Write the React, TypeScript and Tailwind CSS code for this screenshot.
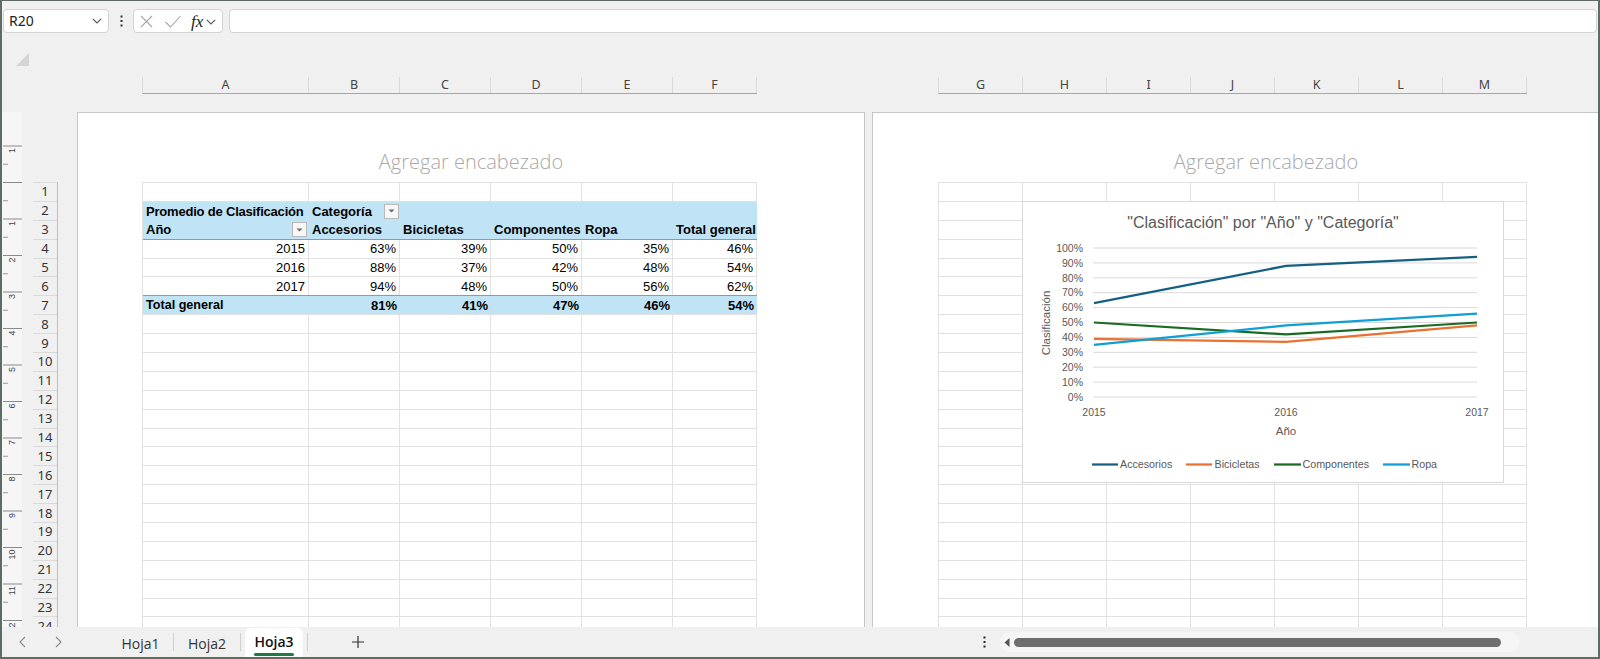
import React from 'react';

type Col = { label: string; w: string };

const leftCols: Col[] = [
  { label: 'A', w: 'w-[166px]' },
  { label: 'B', w: 'w-[91px]' },
  { label: 'C', w: 'w-[91px]' },
  { label: 'D', w: 'w-[91px]' },
  { label: 'E', w: 'w-[91px]' },
  { label: 'F', w: 'w-[84px]' },
];

const rightCols: Col[] = ['G', 'H', 'I', 'J', 'K', 'L', 'M'].map((l) => ({ label: l, w: 'w-[84px]' }));

const ROWS = Array.from({ length: 24 }, (_, i) => i + 1);

const series = [
  { name: 'Accesorios', color: '#156082', v: [63, 88, 94] },
  { name: 'Bicicletas', color: '#e97132', v: [39, 37, 48] },
  { name: 'Componentes', color: '#196b24', v: [50, 42, 50] },
  { name: 'Ropa', color: '#0f9ed5', v: [35, 48, 56] },
];

const pivotRows = [
  { year: '2015', vals: ['63%', '39%', '50%', '35%', '46%'] },
  { year: '2016', vals: ['88%', '37%', '42%', '48%', '54%'] },
  { year: '2017', vals: ['94%', '48%', '50%', '56%', '62%'] },
];
const totals = ['81%', '41%', '47%', '46%', '54%'];

function Chevron({ className = '' }: { className?: string }) {
  return (
    <svg width="10" height="6" viewBox="0 0 10 6" className={className}>
      <path d="M0.8 0.8 L5 5 L9.2 0.8" fill="none" stroke="#555" strokeWidth="1.1" />
    </svg>
  );
}

function VDots({ color = '#333' }: { color?: string }) {
  return (
    <svg width="3" height="12" viewBox="0 0 3 12">
      <rect x="0.5" y="0.5" width="2" height="2" fill={color} />
      <rect x="0.5" y="5" width="2" height="2" fill={color} />
      <rect x="0.5" y="9.5" width="2" height="2" fill={color} />
    </svg>
  );
}

function FilterButton() {
  return (
    <div className="w-[15px] h-[15px] shrink-0 bg-[#f7f7f7] border border-[#b9b9b9] flex items-center justify-center">
      <svg width="7" height="4" viewBox="0 0 7 4">
        <polygon points="0.5,0.5 6.5,0.5 3.5,3.5" fill="#6b6b6b" />
      </svg>
    </div>
  );
}

function FormulaBar() {
  return (
    <div className="h-[41px] shrink-0 flex items-start pt-[8px] pl-[1px] pr-[1px]">
      <div className="w-[106px] h-[24px] rounded-[4px] border border-[#d3d3d3] bg-white flex items-center justify-between pl-[5px] pr-[6px]">
        <span className="text-[14px] leading-none text-[#222] font-['Noto_Sans',sans-serif]">R20</span>
        <Chevron />
      </div>
      <div className="w-[24px] h-[24px] flex items-center justify-center">
        <VDots />
      </div>
      <div className="w-[90px] h-[24px] rounded-[4px] border border-[#d3d3d3] bg-white flex items-center pl-[5px]">
        <svg width="15" height="15" viewBox="0 0 15 15">
          <path d="M2 2 L13 13 M13 2 L2 13" stroke="#a8a8a8" strokeWidth="1.1" />
        </svg>
        <svg width="18" height="15" viewBox="0 0 18 15" className="ml-[10px]">
          <path d="M1.5 8 L6.5 13 L16.5 2" fill="none" stroke="#a8a8a8" strokeWidth="1.1" />
        </svg>
        <span className="ml-[9px] text-[17px] leading-none italic text-[#222] font-['Liberation_Serif',serif]">fx</span>
        <Chevron className="ml-[3px] mt-[2px]" />
      </div>
      <div className="ml-[6px] flex-1 h-[24px] rounded-[4px] border border-[#d3d3d3] bg-white" />
    </div>
  );
}

function ColumnHeaders({ cols }: { cols: Col[] }) {
  return (
    <div className="mt-[35px] h-[17px] flex shrink-0 border-l border-b border-[#a6a6a6] border-l-[#dadada]">
      {cols.map((c) => (
        <div
          key={c.label}
          className={`${c.w} shrink-0 h-full border-r border-[#dadada] flex items-center justify-center text-[12.5px] leading-none text-[#444] font-['Noto_Sans',sans-serif]`}
        >
          {c.label}
        </div>
      ))}
    </div>
  );
}

function Ruler() {
  const zero = 70.5;
  const step = 36.5;
  const majors = Array.from({ length: 14 }, (_, i) => i - 1);
  return (
    <svg width="20" height="515" className="shrink-0 bg-[#f6f6f6]">
      {majors.map((n) => {
        const y = zero + n * step;
        return (
          <g key={n}>
            <line x1="1" x2="20" y1={y} y2={y} stroke="#8a8a8a" strokeWidth="1" />
            <line x1="1" x2="6" y1={y + step / 2} y2={y + step / 2} stroke="#9a9a9a" strokeWidth="1" />
            {n !== 0 && (
              <text
                transform={`translate(13 ${y + 2}) rotate(-90)`}
                textAnchor="end"
                fontSize="9"
                fill="#444"
                fontFamily="Liberation Sans, sans-serif"
              >
                {n === -1 ? 1 : n}
              </text>
            )}
          </g>
        );
      })}
    </svg>
  );
}

function RowHeaders() {
  return (
    <div className="w-[25px] shrink-0 pt-[70px]">
      <div className="border-t border-r border-[#dadada] border-r-[#bdbdbd]">
        {ROWS.map((r) => (
          <div
            key={r}
            className="h-[18.9px] border-b border-[#dadada] flex items-center justify-center text-[13px] leading-none text-[#333] font-['Noto_Sans',sans-serif]"
          >
            {r}
          </div>
        ))}
      </div>
    </div>
  );
}

function PageHeader() {
  return (
    <div className="h-[69px] pt-[35px] text-center text-[20px] leading-[28px] font-light text-[#a9a9a9] font-['Open_Sans',sans-serif]">
      Agregar encabezado
    </div>
  );
}

const cellText = "text-[13px] leading-none text-black whitespace-nowrap font-['Liberation_Sans',sans-serif]";
const headText = "text-[12.6px] font-bold";

function PivotGrid() {
  return (
    <div className="w-[615px] border-l border-t border-[#e1e1e1]">
      {ROWS.map((r) => {
        if (r === 2) {
          return (
            <div key={r} className={`h-[18.9px] flex bg-[#c0e4f5] ${cellText} ${headText}`}>
              <div className="w-[166px] flex items-center px-[3px] tracking-[-0.2px]">Promedio de Clasificación</div>
              <div className="w-[91px] flex items-center justify-between pl-[3px] pr-[1px]">
                <span>Categoría</span>
                <FilterButton />
              </div>
            </div>
          );
        }
        if (r === 3) {
          return (
            <div key={r} className={`h-[18.9px] flex bg-[#c0e4f5] border-b border-[#4fb0e0] ${cellText} ${headText}`}>
              <div className="w-[166px] flex items-center justify-between pl-[3px] pr-[2px]">
                <span>Año</span>
                <FilterButton />
              </div>
              <div className="w-[91px] flex items-center px-[3px]">Accesorios</div>
              <div className="w-[91px] flex items-center px-[3px]">Bicicletas</div>
              <div className="w-[91px] flex items-center px-[3px]">Componentes</div>
              <div className="w-[91px] flex items-center px-[3px]">Ropa</div>
              <div className="w-[84px] flex items-center px-[3px]">Total general</div>
            </div>
          );
        }
        if (r >= 4 && r <= 6) {
          const d = pivotRows[r - 4];
          return (
            <div key={r} className={`h-[18.9px] flex ${cellText} ${r === 6 ? 'border-b border-[#4fb0e0]' : ''}`}>
              <div className={`w-[166px] flex items-center justify-end px-[3px] border-r border-[#e1e1e1] ${r === 6 ? '' : 'border-b'}`}>{d.year}</div>
              {d.vals.map((v, i) => (
                <div
                  key={i}
                  className={`${i === 4 ? 'w-[84px]' : 'w-[91px]'} flex items-center justify-end px-[3px] border-r border-[#e1e1e1] ${r === 6 ? '' : 'border-b'}`}
                >
                  {v}
                </div>
              ))}
            </div>
          );
        }
        if (r === 7) {
          return (
            <div key={r} className={`h-[18.9px] flex bg-[#c0e4f5] border-b border-[#e1e1e1] ${cellText} font-bold`}>
              <div className="w-[166px] flex items-center px-[3px] text-[12.6px]">Total general</div>
              {totals.map((v, i) => (
                <div key={i} className={`${i === 4 ? 'w-[84px]' : 'w-[91px]'} flex items-center justify-end px-[3px]`}>
                  {v}
                </div>
              ))}
            </div>
          );
        }
        return (
          <div key={r} className="h-[18.9px] flex">
            {leftCols.map((c) => (
              <div key={c.label} className={`${c.w} shrink-0 border-r border-b border-[#e1e1e1]`} />
            ))}
          </div>
        );
      })}
    </div>
  );
}

function PlainGrid() {
  return (
    <div className="w-[589px] border-l border-t border-[#e1e1e1]">
      {ROWS.map((r) => (
        <div key={r} className="h-[18.9px] flex">
          {rightCols.map((c) => (
            <div key={c.label} className={`${c.w} shrink-0 border-r border-b border-[#e1e1e1]`} />
          ))}
        </div>
      ))}
    </div>
  );
}

function Chart() {
  const y = (v: number) => 196 - v * 1.49;
  const xs = [72, 264, 455];
  const ticks = [0, 10, 20, 30, 40, 50, 60, 70, 80, 90, 100];
  const legend = [
    { x1: 70, x2: 96, tx: 98 },
    { x1: 164, x2: 190, tx: 192.5 },
    { x1: 252, x2: 279, tx: 280.5 },
    { x1: 361, x2: 388, tx: 389.5 },
  ];
  const font = 'Liberation Sans, Arial, sans-serif';
  return (
    <div className="absolute left-[149px] top-[88px] w-[482px] h-[282px] bg-white border border-[#d9d9d9]">
      <svg width="480" height="280" viewBox="1 1 480 280" className="block">
        <text x="241" y="26.5" textAnchor="middle" fontSize="16" fill="#595959" fontFamily={font}>
          "Clasificación" por "Año" y "Categoría"
        </text>
        {ticks.map((t) => (
          <g key={t}>
            <line x1="71" x2="455" y1={y(t)} y2={y(t)} stroke="#d9d9d9" strokeWidth="1" />
            <text x="61" y={y(t) + 3.7} textAnchor="end" fontSize="10.5" fill="#595959" fontFamily={font}>
              {t}%
            </text>
          </g>
        ))}
        {['2015', '2016', '2017'].map((l, i) => (
          <text key={l} x={xs[i]} y="214.5" textAnchor="middle" fontSize="10.5" fill="#595959" fontFamily={font}>
            {l}
          </text>
        ))}
        <text x="264" y="233.5" textAnchor="middle" fontSize="11.5" fill="#595959" fontFamily={font}>
          Año
        </text>
        <text transform="translate(28 122) rotate(-90)" textAnchor="middle" fontSize="11.5" fill="#595959" fontFamily={font}>
          Clasificación
        </text>
        {series.map((s) => (
          <polyline
            key={s.name}
            points={s.v.map((v, i) => `${xs[i]},${y(v)}`).join(' ')}
            fill="none"
            stroke={s.color}
            strokeWidth="2.25"
            strokeLinejoin="round"
          />
        ))}
        {series.map((s, i) => (
          <g key={s.name}>
            <line x1={legend[i].x1} x2={legend[i].x2} y1="263.5" y2="263.5" stroke={s.color} strokeWidth="2.25" />
            <text x={legend[i].tx} y="267.3" fontSize="10.7" fill="#595959" fontFamily={font}>
              {s.name}
            </text>
          </g>
        ))}
      </svg>
    </div>
  );
}

function TabBar() {
  return (
    <div className="h-[30px] shrink-0 flex items-stretch font-['Open_Sans',sans-serif] text-[14px] text-[#333]">
      <div className="w-[106px] shrink-0 flex items-center">
        <svg width="12" height="12" viewBox="0 0 12 12" className="ml-[15px]">
          <path d="M8 1 L3 6 L8 11" fill="none" stroke="#8a8a8a" strokeWidth="1.1" />
        </svg>
        <svg width="12" height="12" viewBox="0 0 12 12" className="ml-[23px]">
          <path d="M4 1 L9 6 L4 11" fill="none" stroke="#8a8a8a" strokeWidth="1.1" />
        </svg>
      </div>
      <div className="w-[65px] shrink-0 flex items-center justify-center pt-[2px]">Hoja1</div>
      <div className="w-[1px] shrink-0 my-[6px] bg-[#cfcfcf]" />
      <div className="w-[66px] shrink-0 flex items-center justify-center pt-[2px]">Hoja2</div>
      <div className="w-[1px] shrink-0 my-[6px] bg-[#cfcfcf]" />
      <div className="w-[4px] shrink-0" />
      <div className="w-[58px] shrink-0 mt-[1px] bg-white rounded-t-[6px] flex flex-col items-center">
        <span className="mt-[4px] font-semibold text-[#111] leading-[19px]">Hoja3</span>
        <div className="w-[40px] h-[3px] bg-[#1e7a46] rounded-full mt-[2px]" />
      </div>
      <div className="w-[4px] shrink-0" />
      <div className="w-[1px] shrink-0 my-[6px] bg-[#cfcfcf]" />
      <div className="w-[100px] shrink-0 flex items-center justify-center">
        <svg width="14" height="14" viewBox="0 0 14 14">
          <path d="M7 1 V13 M1 7 H13" stroke="#333" strokeWidth="1.2" />
        </svg>
      </div>
      <div className="w-[575px] shrink-0" />
      <div className="w-[3px] shrink-0 flex items-center">
        <VDots color="#222" />
      </div>
      <div className="ml-[14px] w-[520px] shrink-0 flex items-center">
        <div className="h-[20px] flex-1 rounded-full bg-[#f5f5f5] flex items-center pl-[4px] pr-[4px]">
          <svg width="6" height="9" viewBox="0 0 6 9">
            <polygon points="5.5,0 5.5,9 0.5,4.5" fill="#555" />
          </svg>
          <div className="ml-[4px] w-[487px] h-[9px] rounded-full bg-[#6e6e6e]" />
        </div>
      </div>
    </div>
  );
}

export default function App() {
  return (
    <div className="w-[1600px] h-[659px] flex flex-col overflow-hidden bg-[#f0f0f0] border-t border-l-2 border-r-2 border-b-2 border-[#5f6b65]">
      <FormulaBar />
      <div className="flex-1 min-h-0 flex flex-col overflow-hidden">
        <div className="h-[70px] shrink-0 flex">
          <div className="w-[140px] shrink-0 pl-[14px] pt-[11px]">
            <svg width="13" height="13" viewBox="0 0 13 13">
              <polygon points="13,0 13,13 0,13" fill="#d4d4d4" />
            </svg>
          </div>
          <ColumnHeaders cols={leftCols} />
          <div className="w-[181px] shrink-0" />
          <ColumnHeaders cols={rightCols} />
        </div>
        <div className="flex-1 min-h-0 flex overflow-hidden">
          <Ruler />
          <div className="w-[11px] shrink-0" />
          <RowHeaders />
          <div className="w-[19px] shrink-0" />
          <div className="relative w-[788px] h-[600px] shrink-0 bg-white border border-[#c6c6c6]">
            <PageHeader />
            <div className="pl-[64px]">
              <PivotGrid />
            </div>
          </div>
          <div className="w-[7px] shrink-0" />
          <div className="relative w-[788px] h-[600px] shrink-0 bg-white border border-[#c6c6c6]">
            <PageHeader />
            <div className="pl-[65px]">
              <PlainGrid />
            </div>
            <Chart />
          </div>
        </div>
      </div>
      <TabBar />
    </div>
  );
}
